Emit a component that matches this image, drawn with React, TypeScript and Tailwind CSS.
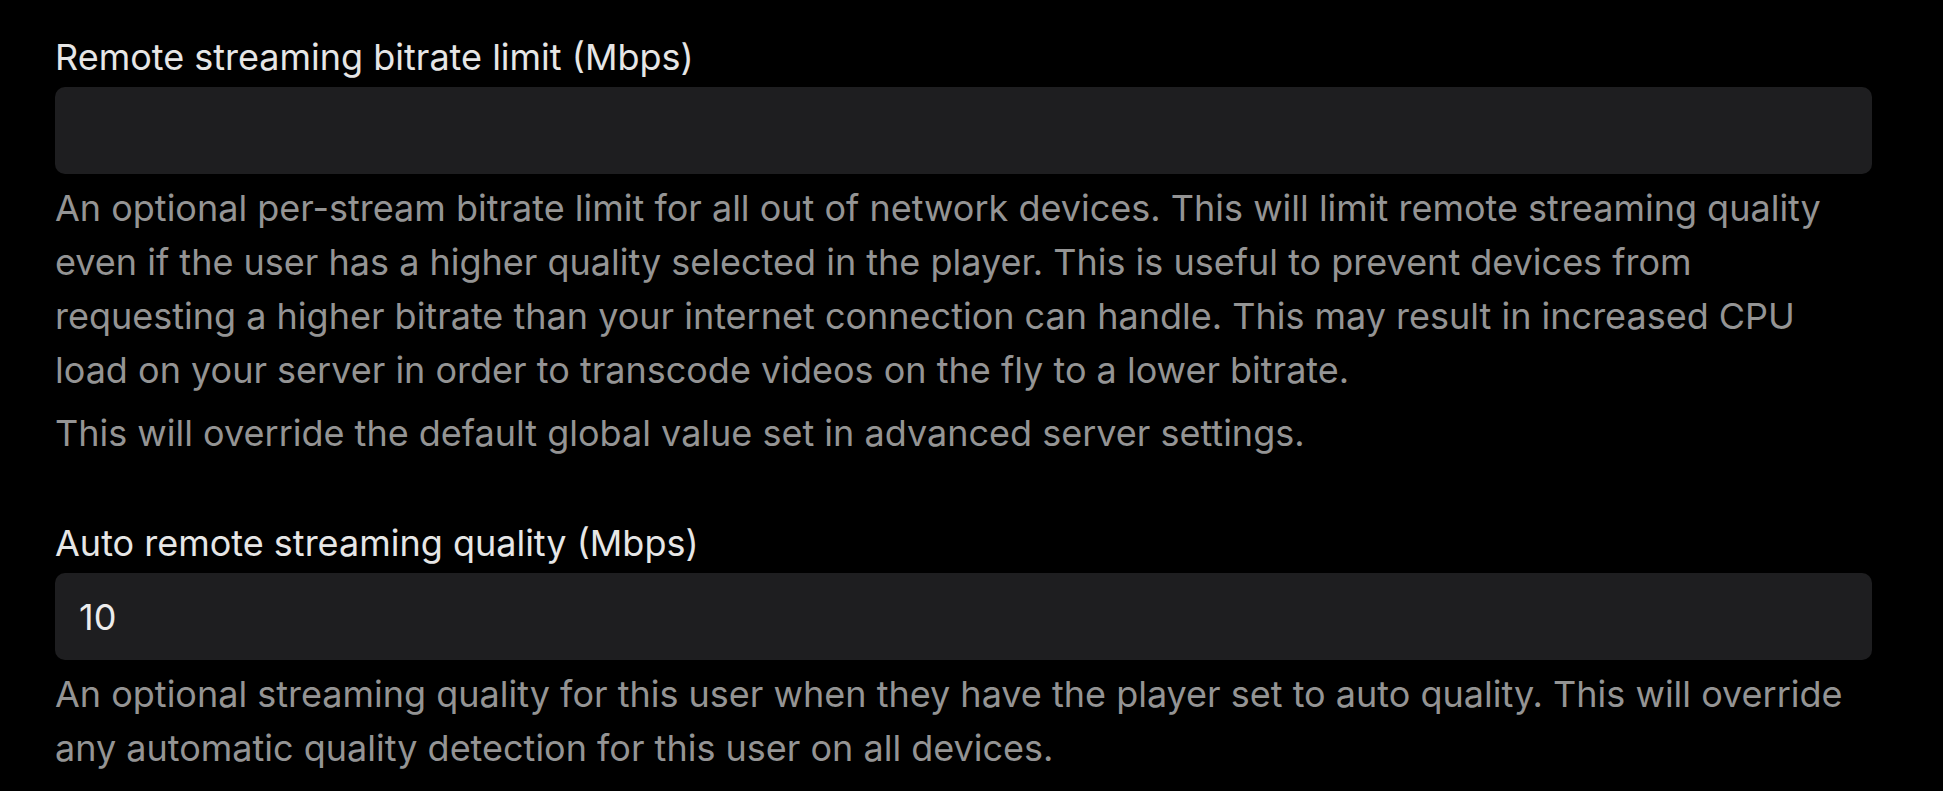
import { useState } from "react";

function Field({
  label,
  value,
  onChange,
  children,
}: {
  label: string;
  value: string;
  onChange: (v: string) => void;
  children: React.ReactNode;
}) {
  return (
    <div>
      <label className="block text-[#e6e6e6] leading-[54px]">{label}</label>
      <input
        type="number"
        value={value}
        onChange={(e) => onChange(e.target.value)}
        className="mt-[3px] block h-[87px] w-full rounded-[10px] bg-[#1e1e20] px-[24px] text-[#ececec] outline-none [appearance:textfield]"
      />
      <div className="mt-[7px] text-[#949494] leading-[54px]">{children}</div>
    </div>
  );
}

export default function App() {
  const [limit, setLimit] = useState("");
  const [auto, setAuto] = useState("10");

  return (
    <div className="min-h-screen bg-black pl-[55px] pr-[71px] pt-[30px] font-['Inter',sans-serif] text-[36px]">
      <Field label="Remote streaming bitrate limit (Mbps)" value={limit} onChange={setLimit}>
        <p>
          An optional per-stream bitrate limit for all out of network devices. This will limit remote streaming quality
          even if the user has a higher quality selected in the player. This is useful to prevent devices from
          requesting a higher bitrate than your internet connection can handle. This may result in increased CPU load on
          your server in order to transcode videos on the fly to a lower bitrate.
        </p>
        <p className="mt-[9px]">This will override the default global value set in advanced server settings.</p>
      </Field>

      {/* second setting */}
      <div className="mt-[56px]">
        <Field label="Auto remote streaming quality (Mbps)" value={auto} onChange={setAuto}>
          <p>
            An optional streaming quality for this user when they have the player set to auto quality. This will
            override any automatic quality detection for this user on all devices.
          </p>
        </Field>
      </div>
    </div>
  );
}
